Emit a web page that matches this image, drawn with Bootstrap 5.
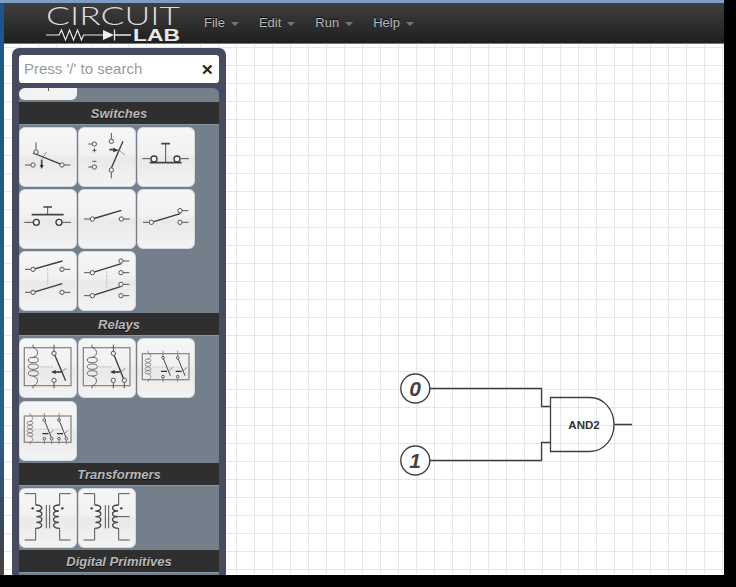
<!DOCTYPE html>
<html lang="en">
<head>
  <meta charset="UTF-8">
  <meta name="viewport" content="width=device-width, initial-scale=1.0">
  <title>CircuitLab</title>
  <link href="https://cdn.jsdelivr.net/npm/bootstrap@5.3.0/dist/css/bootstrap.min.css" rel="stylesheet">
  <style>
    html, body { height: 100%; }
    body { background: #000; overflow: hidden; font-family: "Liberation Sans", Arial, sans-serif; }
    .desk {
      width: 724px;
      height: 575px;
      padding: 3px 0 0 4px;
      background:
        linear-gradient(#7f9ec6, #7f9ec6) 0 0 / 100% 3px no-repeat,
        linear-gradient(180deg, #1f5487 0, #2a5f92 75%, #3c4656 92%, #4a4038 100%);
      overflow: hidden;
    }
    .top-bar {
      height: 41px;
      padding: 0;
      align-items: stretch;
      background: linear-gradient(180deg, #3f3f3f 0, #1f1f1f 100%);
      border-bottom: 1px solid #777;
    }
    .logo { margin-left: 42px; margin-right: 22px; padding: 0; display: block; }
    .logo svg { display: block; overflow: visible; }
    .top-bar .nav { gap: 20px; align-items: center; padding-bottom: 1px; }
    .top-bar .nav-link {
      padding: 0;
      color: #b9b9b9;
      font-size: 13px;
      text-shadow: 0 -1px 0 #000;
    }
    .top-bar .dropdown-toggle::after {
      margin-left: 6px;
      border-top: 4px solid #777;
      border-right: 4px solid transparent;
      border-left: 4px solid transparent;
      border-bottom: 0;
      vertical-align: 1px;
    }
    .sheet {
      height: 531px;
      padding: 4px 0 0 8px;
      background-color: #fff;
      background-image:
        linear-gradient(#e6e6e6 1px, transparent 1px),
        linear-gradient(90deg, #e6e6e6 1px, transparent 1px);
      background-size: 18px 18px;
      background-position: 0 3px, 16px 0;
    }
    .schematic { position: absolute; top: 0; left: 0; }
    .palette-box {
      position: relative;
      width: 214px;
      height: 540px;
      padding: 7px;
      background: #464b60;
      border-radius: 7px 7px 0 0;
    }
    .search-box {
      height: 28px;
      padding: 0 5px;
      margin-bottom: 5px;
      background: #fff;
      border-radius: 3px;
      color: #999;
      font-size: 15px;
    }
    .search-x { color: #222; font-size: 15px; font-weight: 700; line-height: 1; }
    .palette-list {
      background: #73808b;
      border-radius: 6px 6px 0 0;
      overflow: hidden;
    }
    .group-title {
      height: 23px;
      line-height: 24px;
      background: #2f2f2f;
      border-bottom: 1px solid #8b96a0;
      color: #b7b7b7;
      font-size: 13px;
      font-style: italic;
      font-weight: 700;
      text-align: center;
      text-shadow: 0 1px 0 #111;
    }
    .tile-group { gap: 2px 1px; padding: 2px 0 2px; }
    .tile-group.tall { gap: 3px 1px; }
    .tile {
      width: 58px;
      height: 60px;
      background: linear-gradient(180deg, #f6f6f6 0, #f1f1f1 45%, #e9e9e9 52%, #f3f3f3 100%);
      border: 1px solid #d4d8dc;
      border-radius: 6px;
    }
    .tile svg { display: block; margin: -1px; }
    .tile-stub {
      width: 58px;
      height: 12px;
      margin-bottom: 2px;
      background: #f3f3f3;
      border-radius: 0 0 6px 6px;
      position: relative;
    }
    .tile-stub::after {
      content: "";
      position: absolute;
      left: 29px;
      top: 0;
      width: 1px;
      height: 3px;
      background: #666;
    }
    /* tile drawing strokes, coordinates are 3x the tile pixels */
    .ic { fill: none; stroke: #555; stroke-width: 3; }
    .ic .bl { stroke: #3a3a3a; stroke-width: 4; }
    .ic .bm { stroke: #3a3a3a; stroke-width: 2.8; }
    .ic .th { stroke: #666; stroke-width: 2; }
    .ic .cl { stroke: #555; stroke-width: 2.6; }
    .ic .bx { stroke: #8c8c8c; stroke-width: 4; }
    .ic .ds { stroke: #ccc; stroke-width: 4; stroke-dasharray: 8 3; }
    .ic .dm { stroke: #ccc; stroke-width: 3; stroke-dasharray: 6 3; }
    .ic .hv { stroke: #444; stroke-width: 5; }
    .ic .co { stroke: #444; stroke-width: 4; }
    .ic .dk { fill: #333; stroke: none; }
    .ic circle { fill: #f4f4f4; }
    .gate { fill: none; stroke: #3f3f3f; stroke-width: 1.3; }
    .gate-pin { fill: #fff; stroke: #444; stroke-width: 1.4; }
    .gate-num { fill: #444; font: italic 700 21px "Liberation Sans", Arial, sans-serif; text-anchor: middle; }
    .gate-name { fill: #333; font: 700 11.5px "Liberation Sans", Arial, sans-serif; text-anchor: middle; }
  </style>
</head>
<body>
  <div class="desk">
    <nav class="navbar top-bar flex-nowrap justify-content-start">
      <a class="navbar-brand logo" href="#">
        <svg width="136" height="40" viewBox="0 0 136 40">
          <text x="0" y="22" textLength="134" lengthAdjust="spacingAndGlyphs" font-family="Lato, 'Liberation Sans', sans-serif" font-weight="300" font-size="25" fill="#dcdcdc">CIRCUIT</text>
          <text x="87" y="37.5" textLength="47" lengthAdjust="spacingAndGlyphs" font-family="'Liberation Sans', Arial, sans-serif" font-weight="700" font-size="16" fill="#e8e8e8">LAB</text>
          <path d="M0 32h13l2.5-5 4 10 4-10 4 10 4-10 4 10 2-5h20" fill="none" stroke="#e8e8e8" stroke-width="1.2"/>
          <path d="M57 27l11 5-11 5z" fill="#eee"/>
          <path d="M68.500 26.500v11M69 32h16" fill="none" stroke="#e8e8e8" stroke-width="1.3"/>
        </svg>
      </a>
      <ul class="nav flex-nowrap">
        <li class="nav-item dropdown"><a class="nav-link dropdown-toggle" href="#">File</a></li>
        <li class="nav-item dropdown"><a class="nav-link dropdown-toggle" href="#">Edit</a></li>
        <li class="nav-item dropdown"><a class="nav-link dropdown-toggle" href="#">Run</a></li>
        <li class="nav-item dropdown"><a class="nav-link dropdown-toggle" href="#">Help</a></li>
      </ul>
    </nav>

    <div class="sheet position-relative">
      <svg class="schematic" width="720" height="531" viewBox="4 44 720 531">
        <path class="gate" d="M430 388.500H541.500V406.500H550.500M430 460.500H541.500V442.500H550.500M614 424.500H632"/>
        <path class="gate" d="M550.500 397.500H590C604 397.500 614 410 614 424.500C614 439 604 451.500 590 451.500H550.500Z"/>
        <circle class="gate-pin" cx="415.300" cy="388.500" r="14.500"/>
        <circle class="gate-pin" cx="415.300" cy="460.500" r="14.500"/>
        <text class="gate-num" x="415" y="396">0</text>
        <text class="gate-num" x="415" y="468">1</text>
        <text class="gate-name" x="584" y="429">AND2</text>
      </svg>

      <div class="palette-box">
        <div class="search-box d-flex align-items-center justify-content-between">
          <span>Press '/' to search</span>
          <span class="search-x">&#10005;</span>
        </div>
        <div class="palette-list">
          <div class="tile-stub"></div>
          <div class="group-title">Switches</div>
          <div class="tile-group d-flex flex-wrap">
            <div class="tile"><svg class="ic" width="58" height="60" viewBox="0 0 174 180">
              <path d="M51 46V69M18 114H36M135 114H154"/><path class="bl" d="M42 78L129 113"/><path class="th" d="M82 75L68 98"/><path class="hv" d="M68 98V118"/><path class="dk" d="M62 114H74L68 126Z"/>
              <circle cx="51" cy="75" r="6.500"/><circle cx="42" cy="114" r="6.500"/><circle cx="129" cy="114" r="6.500"/></svg></div>
            <div class="tile"><svg class="ic" width="58" height="60" viewBox="0 0 174 180">
              <path d="M31 51H43M31 120H43M100 18V36M100 135V154M49 64V76M43 70H55M43 103H55"/><path class="bl" d="M100 123L135 43"/><path class="hv" d="M94 68H110"/><path class="dk" d="M106 62L122 70L106 76Z"/><path class="th" d="M120 68L140 83"/>
              <circle cx="49" cy="51" r="6.500"/><circle cx="49" cy="120" r="6.500"/><circle cx="100" cy="43" r="6.500"/><circle cx="100" cy="129" r="6.500"/></svg></div>
            <div class="tile"><svg class="ic" width="58" height="60" viewBox="0 0 174 180">
              <path d="M16 95H40M131 95H156M86 50V107"/><path class="hv" d="M38 107H134M73 50H99"/>
              <circle class="bl" cx="51" cy="96" r="9"/><circle class="bl" cx="120" cy="96" r="9"/></svg></div>
            <div class="tile"><svg class="ic" width="58" height="60" viewBox="0 0 174 180">
              <path d="M16 100H42M130 100H156M86 54V77"/><path class="hv" d="M38 77H134M73 54H99"/>
              <circle class="bl" cx="52" cy="100" r="9"/><circle class="bl" cx="120" cy="100" r="9"/></svg></div>
            <div class="tile"><svg class="ic" width="58" height="60" viewBox="0 0 174 180">
              <path d="M18 90H37M136 90H155"/><path class="bl" d="M43 90L130 64"/>
              <circle cx="43" cy="90" r="6.500"/><circle cx="130" cy="90" r="6.500"/></svg></div>
            <div class="tile"><svg class="ic" width="58" height="60" viewBox="0 0 174 180">
              <path d="M18 100H37M135 65H154M135 100H154"/><path class="bl" d="M43 100L130 74"/>
              <circle cx="43" cy="100" r="6.500"/><circle cx="129" cy="65" r="6.500"/><circle cx="129" cy="100" r="6.500"/></svg></div>
            <div class="tile"><svg class="ic" width="58" height="60" viewBox="0 0 174 180">
              <path class="ds" d="M86 51V106"/><path d="M18 55H37M135 55H154M18 124H37M135 124H154"/><path class="bl" d="M42 55L130 30M42 124L130 98"/>
              <circle cx="42" cy="55" r="6.500"/><circle cx="129" cy="55" r="6.500"/><circle cx="42" cy="124" r="6.500"/><circle cx="129" cy="124" r="6.500"/></svg></div>
            <div class="tile"><svg class="ic" width="58" height="60" viewBox="0 0 174 180">
              <path class="ds" d="M86 60V115"/><path d="M18 65H37M135 30H154M135 65H154M18 134H37M135 100H154M135 134H154"/><path class="bl" d="M43 65L130 38M43 134L130 106"/>
              <circle cx="43" cy="65" r="6.500"/><circle cx="129" cy="30" r="6.500"/><circle cx="129" cy="65" r="6.500"/><circle cx="43" cy="134" r="6.500"/><circle cx="129" cy="100" r="6.500"/><circle cx="129" cy="134" r="6.500"/></svg></div>
          </div>

          <div class="group-title">Relays</div>
          <div class="tile-group tall d-flex flex-wrap">
            <div class="tile"><svg class="ic" width="58" height="60" viewBox="0 0 174 180">
              <rect class="bx" x="16" y="29" width="140" height="114"/>
              <path class="cl" d="M42 20V28C60 34 60 54 42 58M42 114C60 118 60 138 42 144V151"/>
              <ellipse class="cl" cx="43" cy="66" rx="15" ry="8"/><ellipse class="cl" cx="43" cy="86" rx="15" ry="8"/><ellipse class="cl" cx="43" cy="106" rx="15" ry="8"/>
              <path d="M105 20V41M105 133V151"/>
              <path class="ds" d="M62 87H102"/><path class="bl" d="M105 46L140 128"/><path class="th" d="M127 102L142 91"/><path class="hv" d="M108 102H127"/><path class="dk" d="M96 102L110 96V108Z"/>
              <circle cx="105" cy="46" r="6.500"/><circle cx="105" cy="127" r="6.500"/></svg></div>
            <div class="tile"><svg class="ic" width="58" height="60" viewBox="0 0 174 180">
              <rect class="bx" x="16" y="29" width="140" height="114"/>
              <path class="cl" d="M42 20V28C60 34 60 54 42 58M42 114C60 118 60 138 42 144V151"/>
              <ellipse class="cl" cx="43" cy="66" rx="15" ry="8"/><ellipse class="cl" cx="43" cy="86" rx="15" ry="8"/><ellipse class="cl" cx="43" cy="106" rx="15" ry="8"/>
              <path d="M106 20V41M106 133V151M139 133V151"/>
              <path class="ds" d="M62 87H102"/><path class="bl" d="M106 46L139 128"/><path class="th" d="M127 102L142 91"/><path class="hv" d="M108 102H127"/><path class="dk" d="M96 102L110 96V108Z"/>
              <circle cx="106" cy="46" r="6.500"/><circle cx="106" cy="127" r="6.500"/><circle cx="139" cy="127" r="6.500"/></svg></div>
            <div class="tile"><svg class="ic" width="58" height="60" viewBox="0 0 174 180">
              <rect class="bx" x="16" y="47" width="140" height="78"/>
              <path class="th" d="M33 38V44C44 48 44 60 33 62M33 108C44 110 44 122 33 126V132M78 38V55M122 38V55M78 118V132M122 118V132"/>
              <ellipse class="th" cx="33" cy="68" rx="9" ry="5"/><ellipse class="th" cx="33" cy="80" rx="9" ry="5"/><ellipse class="th" cx="33" cy="92" rx="9" ry="5"/><ellipse class="th" cx="33" cy="103" rx="9" ry="5"/>
              <path class="dm" d="M46 87H130"/><path class="bm" d="M78 59L100 113M122 59L144 113"/><path class="th" d="M95 98L108 88M138 98L150 88"/><path class="dk" d="M72 98H90V102H72ZM116 98H134V102H116Z"/>
              <circle cx="78" cy="59" r="4"/><circle cx="122" cy="59" r="4"/><circle cx="78" cy="116" r="4"/><circle cx="122" cy="116" r="4"/></svg></div>
            <div class="tile"><svg class="ic" width="58" height="60" viewBox="0 0 174 180">
              <rect class="bx" x="16" y="45" width="140" height="79"/>
              <path class="th" d="M33 36V42C44 46 44 58 33 60M33 106C44 108 44 120 33 124V130M76 36V53M120 36V53M76 116V130M98 116V130M120 116V130M142 116V130"/>
              <ellipse class="th" cx="33" cy="66" rx="9" ry="5"/><ellipse class="th" cx="33" cy="78" rx="9" ry="5"/><ellipse class="th" cx="33" cy="90" rx="9" ry="5"/><ellipse class="th" cx="33" cy="101" rx="9" ry="5"/>
              <path class="dm" d="M46 85H130"/><path class="bm" d="M76 57L98 112M120 57L142 112"/><path class="th" d="M92 98L104 88M136 98L148 88"/><path class="dk" d="M70 96H88V100H70ZM114 96H132V100H114Z"/>
              <circle cx="76" cy="57" r="4"/><circle cx="120" cy="57" r="4"/><circle cx="76" cy="113" r="4"/><circle cx="98" cy="113" r="4"/><circle cx="120" cy="113" r="4"/><circle cx="142" cy="113" r="4"/></svg></div>
          </div>

          <div class="group-title">Transformers</div>
          <div class="tile-group d-flex flex-wrap">
            <div class="tile"><svg class="ic" width="58" height="60" viewBox="0 0 174 180">
              <path d="M17 17H50V51M50 121V156H17M155 17H122V51M122 121V156H155M82 51V121M92 51V121"/>
              <path class="co" d="M50 51C74 51 74 69 52 69C74 69 74 86 52 86C74 86 74 103 52 103C74 103 74 121 50 121M122 51C98 51 98 69 120 69C98 69 98 86 120 86C98 86 98 103 120 103C98 103 98 121 122 121"/>
              <circle cx="41" cy="61" r="3.500" style="fill:#333;stroke:none"/><circle cx="130" cy="61" r="3.500" style="fill:#333;stroke:none"/></svg></div>
            <div class="tile"><svg class="ic" width="58" height="60" viewBox="0 0 174 180">
              <path d="M17 17H50V51M50 121V156H17M155 17H122V51M122 121V156H155M82 51V121M92 51V121M117 86H155"/>
              <path class="co" d="M50 51C74 51 74 69 52 69C74 69 74 86 52 86C74 86 74 103 52 103C74 103 74 121 50 121M122 51C98 51 98 69 120 69C98 69 98 86 120 86C98 86 98 103 120 103C98 103 98 121 122 121"/>
              <circle cx="41" cy="61" r="3.500" style="fill:#333;stroke:none"/><circle cx="130" cy="61" r="3.500" style="fill:#333;stroke:none"/></svg></div>
          </div>

          <div class="group-title">Digital Primitives</div>
          <div class="tile-group d-flex flex-wrap"></div>
        </div>
      </div>
    </div>
  </div>
  <script src="https://cdn.jsdelivr.net/npm/bootstrap@5.3.0/dist/js/bootstrap.bundle.min.js"></script>
</body>
</html>
